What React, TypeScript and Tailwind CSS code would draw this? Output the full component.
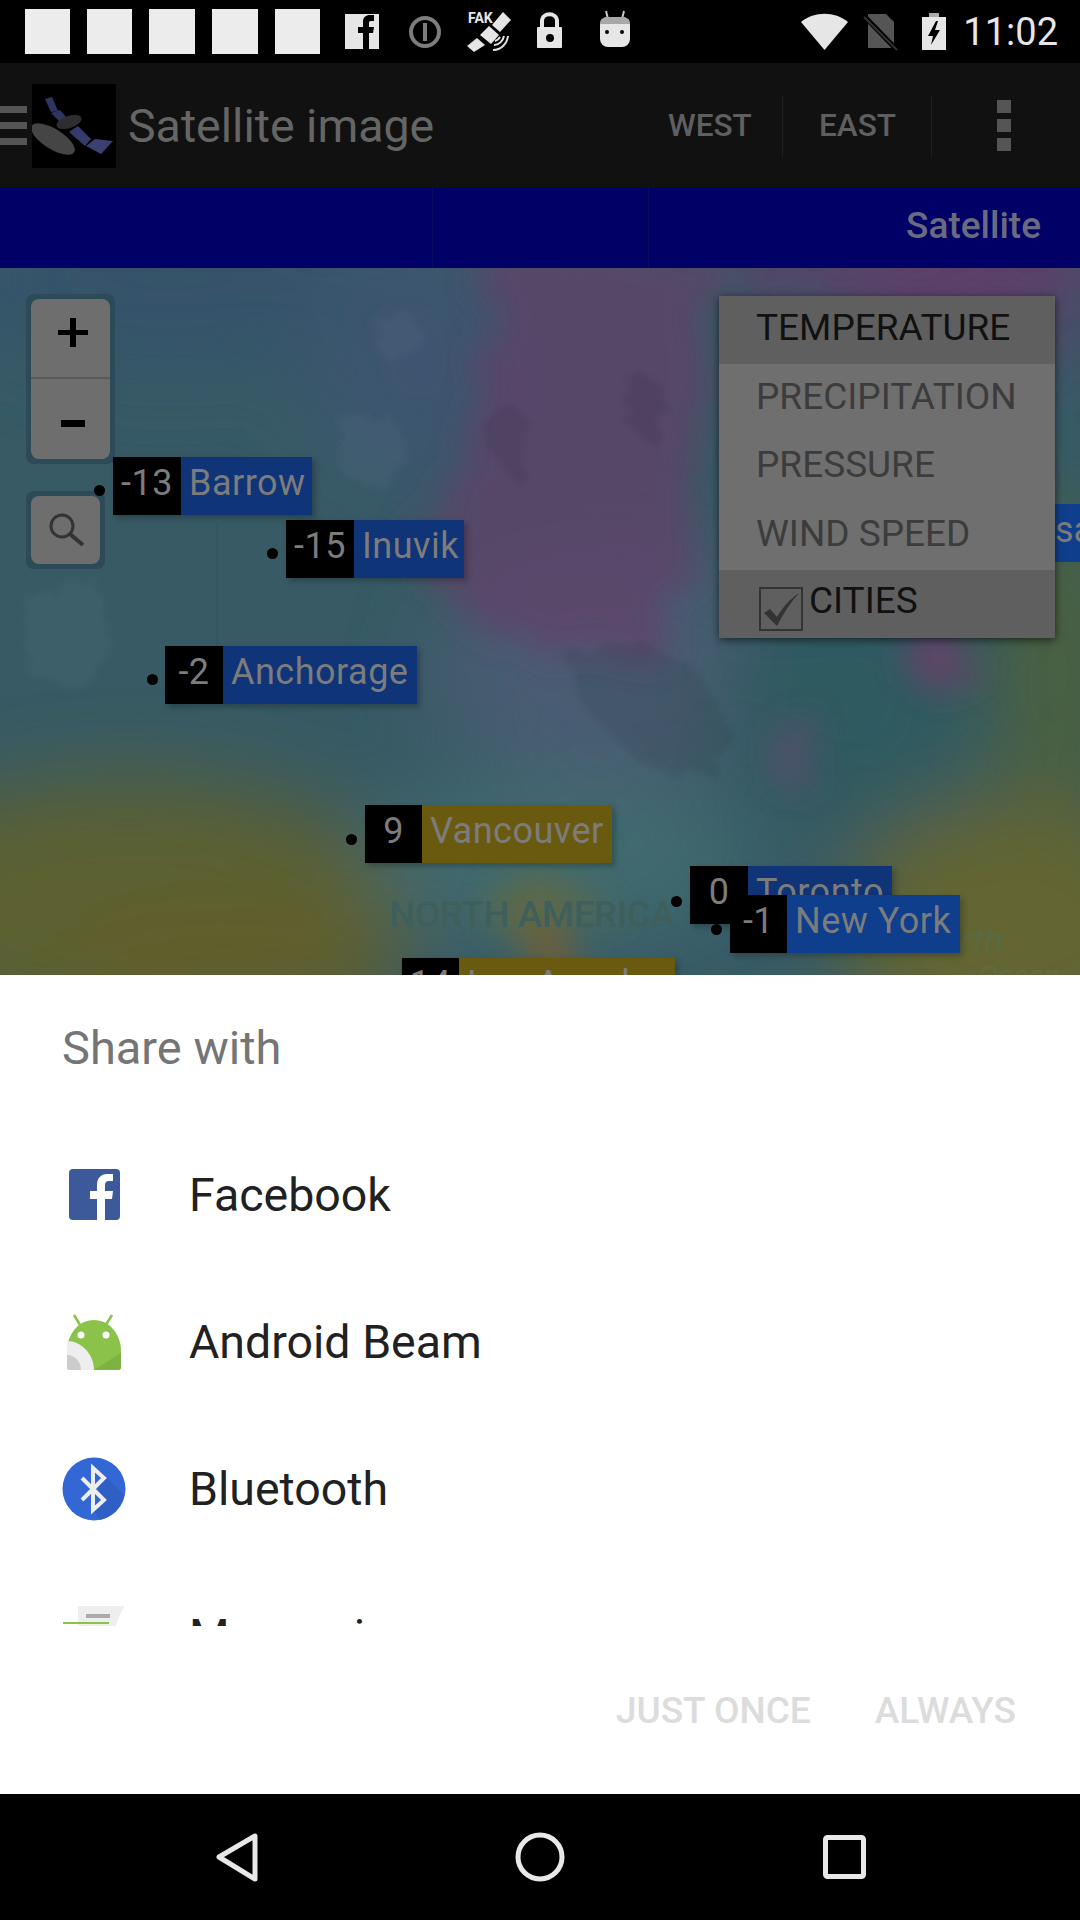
import React from 'react';

function StatusIcons() {
  return (
    <svg width="1080" height="63" viewBox="0 0 1080 63" className="absolute left-0 top-0">
      {/* facebook */}
      <rect x="345" y="14" width="34" height="35" fill="#e6e6e6" />
      <path d="M363 49V33h-5v-6h5v-5c0-5 3-7 7-7h4v6h-3c-2 0-2 1-2 2v4h5l-1 6h-4v16z" fill="#000" />
      {/* info ring */}
      <circle cx="425" cy="32" r="14" fill="none" stroke="#7d7d7d" strokeWidth="4" />
      <rect x="423" y="23" width="4" height="18" fill="#7d7d7d" />
      {/* satellite */}
      <path d="M503 12l8 8-11 12-8-7z" fill="#e6e6e6" />
      <path d="M489 26l10 9-8 9-11-9z" fill="#e6e6e6" />
      <path d="M477 38l8 7-11 7-7-6z" fill="#e6e6e6" />
      <path d="M493 50c8 0 14-6 15-14M494 45c5 0 9-4 10-9M495 41c3-1 4-2 5-4" fill="none" stroke="#e6e6e6" strokeWidth="2" />
      {/* lock */}
      <path d="M542 27v-6c0-9 15-9 15 0v6" fill="none" stroke="#e6e6e6" strokeWidth="4" />
      <rect x="537" y="27" width="25" height="21" rx="1" fill="#e6e6e6" />
      <circle cx="550" cy="38" r="4" fill="#000" />
      {/* marshmallow */}
      <path d="M606 11l2 8M624 11l-2 8" stroke="#c8c8c8" strokeWidth="2" />
      <rect x="600" y="17" width="30" height="30" rx="8" fill="#e6e6e6" />
      <path d="M600 24c0-5 3-7 8-7h14c5 0 8 2 8 7z" fill="#a8a8a8" />
      <circle cx="607" cy="32" r="2" fill="#000" />
      <circle cx="622" cy="32" r="2" fill="#000" />
      {/* wifi */}
      <path d="M801 22c13-11 34-11 47 0l-23.500 28z" fill="#e6e6e6" />
      {/* no sim */}
      <path d="M868 14h18l8 8v26h-26z" fill="#555" />
      <path d="M865 17l32 33" stroke="#000" strokeWidth="5" />
      <path d="M864 17l33 33" stroke="#333" strokeWidth="2" />
      {/* battery */}
      <path d="M929 13h10v4h7v33h-24v-33h7z" fill="#e6e6e6" />
      <path d="M929 13h10v4h-10z" fill="#aaa" />
      <path d="M936 21l-8 15h5l-2 9 9-15h-5l3-9z" fill="#000" />
    </svg>
  );
}

function CityLabel({ pos, dot, temp, name, tempW, nameW, tone }: { pos: string; dot: string; temp: string; name: string; tempW: string; nameW: string; tone: string }) {
  return (
    <>
      <div className={`absolute w-[11px] h-[11px] rounded-full bg-black ${dot}`} />
      <div className={`absolute flex h-[58px] text-[36px] leading-[53px] tracking-[0.5px] text-[#7c7c7c] shadow-[3px_3px_6px_rgba(0,0,0,0.25)] ${pos}`}>
        <div className={`bg-black text-center ${tempW}`}>{temp}</div>
        <div className={`pl-[8px] whitespace-nowrap overflow-hidden ${tone} ${nameW}`}>{name}</div>
      </div>
    </>
  );
}

function MapBackground() {
  return (
    <svg className="absolute inset-0" width="1080" height="707" viewBox="0 0 1080 707">
      <defs>
        <filter id="soft" x="-40%" y="-40%" width="180%" height="180%"><feGaussianBlur stdDeviation="42" /></filter>
        <filter id="mottle" x="-20%" y="-20%" width="140%" height="140%">
          <feTurbulence type="fractalNoise" baseFrequency="0.028" numOctaves="3" seed="7" />
          <feDisplacementMap in="SourceGraphic" scale="60" />
          <feGaussianBlur stdDeviation="16" />
        </filter>
        <filter id="land" x="-20%" y="-20%" width="140%" height="140%">
          <feTurbulence type="fractalNoise" baseFrequency="0.05" numOctaves="3" seed="3" />
          <feDisplacementMap in="SourceGraphic" scale="24" />
          <feGaussianBlur stdDeviation="3" />
        </filter>
      </defs>
      <rect width="1080" height="707" fill="#375a65" />
      <g filter="url(#soft)">
        <ellipse cx="170" cy="10" rx="220" ry="90" fill="#34526b" />
        <ellipse cx="420" cy="90" rx="110" ry="130" fill="#3c5570" />
        <ellipse cx="620" cy="400" rx="190" ry="120" fill="#4a5c72" />
        <ellipse cx="850" cy="430" rx="130" ry="130" fill="#2d5a60" />
        <ellipse cx="1060" cy="400" rx="70" ry="170" fill="#49603f" />
        <ellipse cx="1010" cy="660" rx="170" ry="130" fill="#636531" />
        <ellipse cx="130" cy="640" rx="280" ry="130" fill="#5c6030" />
        <ellipse cx="230" cy="700" rx="180" ry="60" fill="#625f2a" />
        <ellipse cx="560" cy="590" rx="190" ry="80" fill="#3f6a70" />
        <ellipse cx="960" cy="30" rx="130" ry="70" fill="#5f3e6b" />
      </g>
      <g filter="url(#mottle)">
        <path d="M500 -30H730L700 110 690 300 650 390 500 380 410 290 470 170z" fill="#623e69" fillOpacity="0.7" />
        <path d="M740 -30H1080V30H740z" fill="#5d3f6a" fillOpacity="0.7" />
        <ellipse cx="935" cy="385" rx="32" ry="34" fill="#6a3f6b" fillOpacity="0.8" />
        <ellipse cx="795" cy="480" rx="16" ry="50" fill="#6a4a70" fillOpacity="0.6" />
        <ellipse cx="550" cy="680" rx="26" ry="26" fill="#7a5c30" fillOpacity="0.8" />
        <ellipse cx="545" cy="640" rx="60" ry="34" fill="#6e6a30" fillOpacity="0.6" />
      </g>
      <g fill="#000" fillOpacity="0.07" filter="url(#land)">
        <path d="M565 390l70-20 60 30 40 70-20 40-70-10-60-60z" />
        <path d="M480 170l25-40 30 30-15 60z" />
        <path d="M620 150l15-50 30 20-10 60z" />
      </g>
      <g fill="#fff" fillOpacity="0.03" filter="url(#land)">
        <path d="M340 150l50-5 20 40-30 35-35-10z" />
        <path d="M370 70l35-30 20 30-30 30z" />
        <path d="M25 330l70-20 15 50-20 60-60-10z" />
      </g>
      <path d="M217 255v125" stroke="#000" strokeOpacity="0.08" />
    </svg>
  );
}

function ListRow({ icon, label, iconShift }: { icon: React.ReactNode; label: string; iconShift?: string }) {
  return (
    <div className="flex h-[147px] items-center shrink-0">
      <div className="flex w-[189px] pl-[62px]">
        <div className={`w-[64px] h-[64px] flex items-center justify-center ${iconShift ?? ''}`}>{icon}</div>
      </div>
      <span className="text-[46.5px] leading-[56px] text-[#212121]">{label}</span>
    </div>
  );
}

export default function App() {
  return (
    <div className="w-[1080px] h-[1920px] flex flex-col overflow-hidden bg-black font-['Roboto',sans-serif]">
      {/* status bar */}
      <div className="relative h-[63px] shrink-0 bg-black">
        <div className="flex gap-[17px] pl-[25px] pt-[9px]">
          <div className="w-[45px] h-[45px] bg-[#ececec]" />
          <div className="w-[45px] h-[45px] bg-[#ececec]" />
          <div className="w-[46px] h-[45px] bg-[#ececec]" />
          <div className="w-[46px] h-[45px] bg-[#ececec]" />
          <div className="w-[45px] h-[45px] bg-[#ececec]" />
        </div>
        <StatusIcons />
        <span className="absolute left-[468px] top-[10px] text-[14px] font-bold leading-[16px] text-[#e6e6e6]">FAK</span>
        <span className="absolute right-[22px] top-[10px] text-[38px] leading-[44px] text-[#e6e6e6]">11:02</span>
      </div>

      {/* app bar */}
      <div className="flex h-[125px] shrink-0 items-center bg-[#111111]">
        <div className="flex w-[32px] flex-col gap-[9px] pr-[5px]">
          <div className="h-[7px] bg-[#555555]" />
          <div className="h-[7px] bg-[#555555]" />
          <div className="h-[7px] bg-[#555555]" />
        </div>
        <svg width="84" height="84" viewBox="0 0 84 84" className="bg-black shrink-0">
          <path d="M13 15l7-2 6 14-7 1z" fill="#2e3560" />
          <path d="M19 29l9-3 8 9-7 4z" fill="#2e3560" />
          <path d="M37 48l9-6 13 13-6 7z" fill="#353b6a" />
          <path d="M54 62l9-7 18 2-12 13z" fill="#3a4070" />
          <ellipse cx="37" cy="38" rx="13" ry="6" transform="rotate(-18 37 38)" fill="#2e2e2e" />
          <ellipse cx="21" cy="55" rx="25" ry="10" transform="rotate(32 21 55)" fill="#454545" />
        </svg>
        <span className="ml-[12px] text-[46.5px] leading-[56px] text-[#656565]">Satellite image</span>
        <div className="ml-auto flex items-center">
          <div className="flex h-[62px] w-[115px] items-center border-r border-[#1f1f1f] text-[31.5px] font-medium text-[#5f5f5f]">WEST</div>
          <div className="flex h-[62px] w-[149px] items-center border-r border-[#1f1f1f] pl-[36px] text-[31.5px] font-medium text-[#5f5f5f]">EAST</div>
          <div className="flex w-[148px] flex-col items-center gap-[6px] pr-[4px]">
            <div className="w-[14px] h-[13px] bg-[#555555]" />
            <div className="w-[14px] h-[13px] bg-[#555555]" />
            <div className="w-[14px] h-[13px] bg-[#555555]" />
          </div>
        </div>
      </div>

      {/* tabs */}
      <div className="flex h-[80px] shrink-0 items-center bg-[#000066]">
        <div className="h-full w-[433px] border-r border-[#0a0a5c]" />
        <div className="h-full w-[216px] border-r border-[#0a0a5c]" />
        <span className="ml-auto pb-[4px] pr-[39px] text-[37px] leading-[44px] font-medium text-[#6a6a80]">Satellite</span>
      </div>

      {/* map */}
      <div className="relative h-[707px] shrink-0 overflow-hidden">
        <MapBackground />
        <span className="absolute left-[389px] top-[625px] text-[37px] leading-[44px] font-medium tracking-[-0.5px] text-[#3f5f5c]">NORTH AMERICA</span>
        <span className="absolute left-[960px] top-[652px] text-[36px] leading-[44px] italic text-[#5c6a42]">rth Atlan</span>
        <span className="absolute left-[978px] top-[690px] text-[30px] leading-[36px] italic text-[#5e6c44]">Ocean</span>

        {/* zoom buttons */}
        <div className="absolute left-[26px] top-[26px] rounded-[8px] bg-[#2c4a58] p-[5px]">
          <div className="flex w-[79px] h-[160px] flex-col rounded-[8px] bg-[#6e6e6e]">
            <div className="flex h-[80px] items-center justify-center border-b-2 border-[#5a5a5a] pl-[5px] pb-[12px]">
              <svg width="30" height="29" viewBox="0 0 30 29"><path d="M0 12h30v5H0zM12 0h6v29h-6z" fill="#000" /></svg>
            </div>
            <div className="flex h-[80px] items-center justify-center pl-[5px] pt-[8px]">
              <div className="w-[24px] h-[7px] bg-black" />
            </div>
          </div>
        </div>
        <div className="absolute left-[26px] top-[223px] rounded-[8px] bg-[#2c4a58] p-[5px]">
          <div className="flex w-[69px] h-[68px] items-center justify-center rounded-[8px] bg-[#6e6e6e]">
            <svg width="36" height="34" viewBox="0 0 36 34" fill="none" stroke="#333" strokeWidth="3"><circle cx="14" cy="13" r="11" /><path d="M22 21l13 11" strokeWidth="4" /></svg>
          </div>
        </div>

        <CityLabel pos="left-[690px] top-[598px]" dot="left-[671px] top-[628px]" temp="0" name="Toronto" tempW="w-[58px]" nameW="w-[144px]" tone="bg-[#0f3478]" />
        <CityLabel pos="left-[113px] top-[189px]" dot="left-[94px] top-[217px]" temp="-13" name="Barrow" tempW="w-[68px]" nameW="w-[131px]" tone="bg-[#0f3478]" />
        <CityLabel pos="left-[286px] top-[252px]" dot="left-[267px] top-[280px]" temp="-15" name="Inuvik" tempW="w-[68px]" nameW="w-[110px]" tone="bg-[#0f3478]" />
        <CityLabel pos="left-[165px] top-[378px]" dot="left-[147px] top-[406px]" temp="-2" name="Anchorage" tempW="w-[58px]" nameW="w-[194px]" tone="bg-[#0f3478]" />
        <CityLabel pos="left-[365px] top-[537px]" dot="left-[346px] top-[566px]" temp="9" name="Vancouver" tempW="w-[57px]" nameW="w-[190px]" tone="bg-[#6a5a10]" />
        <CityLabel pos="left-[402px] top-[690px]" dot="left-[384px] top-[725px]" temp="14" name="Los Angeles" tempW="w-[57px]" nameW="w-[216px]" tone="bg-[#6a5a10]" />
        <CityLabel pos="left-[730px] top-[627px]" dot="left-[711px] top-[656px]" temp="-1" name="New York" tempW="w-[57px]" nameW="w-[173px]" tone="bg-[#0f3f8c]" />
        <div className="absolute left-[1000px] top-[236px] flex h-[58px] w-[80px] justify-end overflow-hidden bg-[#0f3f8c] text-[36px] leading-[53px] text-[#7c7c7c]"><span className="w-[25px] overflow-hidden">sa</span></div>

        {/* layer menu */}
        <div className="absolute left-[719px] top-[28px] w-[336px] text-[37px] text-[#3c3c3c] shadow-[0_2px_8px_rgba(0,0,0,0.6)]">
          <div className="flex h-[68px] items-center bg-[#5f5f5f] pb-[4px] pl-[37px] text-[#111111]">TEMPERATURE</div>
          <div className="flex h-[69px] items-center bg-[#6f6f6f] pb-[4px] pl-[37px]">PRECIPITATION</div>
          <div className="flex h-[68px] items-center bg-[#6f6f6f] pb-[4px] pl-[37px]">PRESSURE</div>
          <div className="flex h-[69px] items-center bg-[#6f6f6f] pb-[4px] pl-[37px]">WIND SPEED</div>
          <div className="flex h-[68px] items-start bg-[#5f5f5f] pl-[40px] pt-[17px] text-[#111111]">
            <svg width="44" height="44" viewBox="0 0 44 44" className="shrink-0">
              <rect x="1" y="1" width="42" height="42" fill="none" stroke="#333" strokeWidth="2" />
              <path d="M5 26l6-4 7 8C24 20 31 12 40 6 31 16 24 27 18 39z" fill="#333" />
            </svg>
            <span className="ml-[6px] -mt-[8px] leading-[44px]">CITIES</span>
          </div>
        </div>
      </div>

      {/* share sheet */}
      <div className="flex h-[819px] shrink-0 flex-col bg-white">
        <div className="flex h-[146px] shrink-0 items-center pl-[62px] text-[47px] leading-[56px] text-[#757575]">Share with</div>
        <div className="flex h-[505px] shrink-0 flex-col overflow-hidden">
          <ListRow
            label="Facebook"
            icon={
              <svg width="51" height="51" viewBox="0 0 51 51">
                <rect width="51" height="51" rx="4" fill="#3c5a9a" />
                <path d="M28 51V30h-7v-8h7v-6c0-7 4-11 10-11h6v7h-4c-3 0-4 2-4 4v6h8l-1 8h-7v21z" fill="#fff" />
              </svg>
            }
          />
          <ListRow
            label="Android Beam"
            icon={
              <svg width="56" height="58" viewBox="0 0 56 58">
                <path d="M8 2l8 13M46 2l-8 13" stroke="#8bc34a" strokeWidth="2.5" />
                <path d="M1 56V38C1 22 12 7 28 7s27 15 27 31v16a3 3 0 0 1-3 3H4z" fill="#8bc34a" />
                <path d="M28 57L55 40v14a3 3 0 0 1-3 3z" fill="#7cb342" />
                <circle cx="15" cy="22" r="3.5" fill="#fff" />
                <circle cx="40" cy="22" r="3.5" fill="#fff" />
                <path d="M1 28c14 0 27 13 27 29H4a3 3 0 0 1-3-3z" fill="#eeeeee" />
                <path d="M1 42c8 0 14 7 14 15H4a3 3 0 0 1-3-3z" fill="#cccccc" />
              </svg>
            }
          />
          <ListRow
            label="Bluetooth"
            icon={
              <svg width="64" height="64" viewBox="0 0 64 64">
                <circle cx="32" cy="32" r="31.5" fill="#3367d6" />
                <path d="M34 10l28 28a31.500 31.500 0 0 1-24 25L31 53l11-10-6-11 6-11z" fill="#2f5fc4" />
                <path d="M20 21l22 22-11 10V11l11 10-22 22" fill="none" stroke="#eeeeee" strokeWidth="4" />
              </svg>
            }
          />
          <ListRow
            label="Messaging"
            iconShift="pt-[3px]"
            icon={
              <svg width="62" height="62" viewBox="0 0 62 62">
                <path d="M15 0h46l-8 18v10H15z" fill="#eeeeee" />
                <rect x="23" y="8" width="24" height="4" fill="#aaaaaa" />
                <rect x="0" y="16" width="46" height="2" fill="#8bc34a" />
              </svg>
            }
          />
        </div>
        <div className="flex flex-1 items-start justify-end pt-[63px] text-[37px] leading-[44px] font-medium text-[#dcdcdc]">
          <button className="mr-[64px]">JUST ONCE</button>
          <button className="mr-[64px]">ALWAYS</button>
        </div>
      </div>

      {/* nav bar */}
      <div className="flex h-[126px] shrink-0 items-center bg-black">
        <svg width="1080" height="126" viewBox="0 0 1080 126" fill="none" stroke="#e8e8e8" strokeWidth="5" strokeLinejoin="round">
          <path d="M219 63l36-21v43z" />
          <circle cx="540" cy="63" r="22" />
          <rect x="825.5" y="43.5" width="38" height="39" rx="2" />
        </svg>
      </div>
    </div>
  );
}
